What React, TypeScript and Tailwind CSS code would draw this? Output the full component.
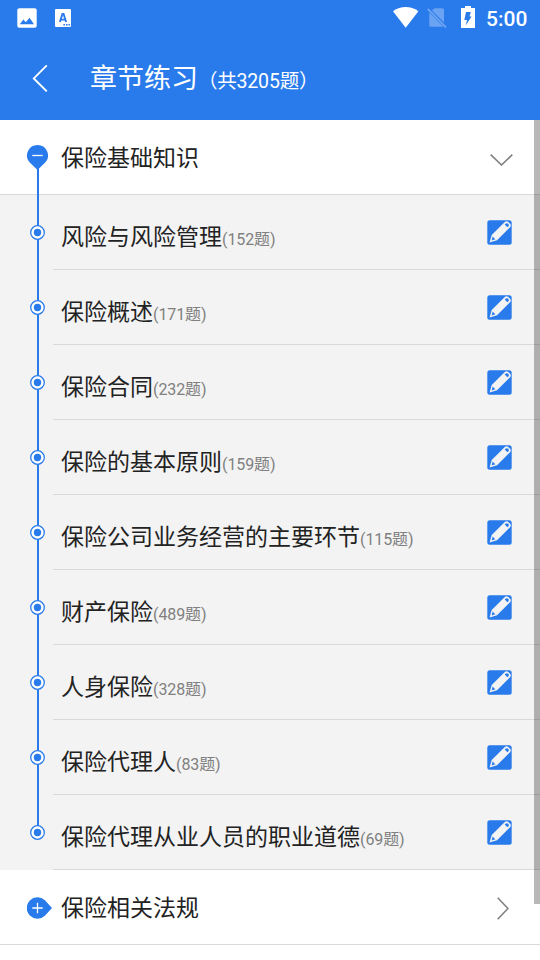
interface Section {
  title: string;
  count: number;
}

const sections: Section[] = [
  { title: "风险与风险管理", count: 152 },
  { title: "保险概述", count: 171 },
  { title: "保险合同", count: 232 },
  { title: "保险的基本原则", count: 159 },
  { title: "保险公司业务经营的主要环节", count: 115 },
  { title: "财产保险", count: 489 },
  { title: "人身保险", count: 328 },
  { title: "保险代理人", count: 83 },
  { title: "保险代理从业人员的职业道德", count: 69 },
];

const StatusBar = () => (
  <div className="flex h-9 items-start text-white">
    <svg className="ml-[17px] mt-2 h-5 w-5" viewBox="0 0 20 20">
      <rect x="0.3" y="0.3" width="19.4" height="19.4" rx="2" fill="#fff" />
      <path d="M2.8 16.3 6.3 11.4 8.8 14.3 12.5 9.8 17 16.3Z" fill="#297bec" />
    </svg>
    <svg className="ml-[18px] mt-[9px] h-[18px] w-4" viewBox="0 0 16 18">
      <rect width="16" height="18" rx="1" fill="#fff" />
      <path d="M4.9 13 7.4 5H8.6L11.1 13M5.8 10.6H10.2" fill="none" stroke="#297bec" strokeWidth="1.9" />
      <path d="M8.4 15h1.6v1.6H8.4zM11 15h1.6v1.6H11zM13.5 15h1.6v1.6h-1.6z" fill="#297bec" />
    </svg>
    <svg className="ml-auto mt-[7px] h-[21px] w-[26px]" viewBox="0 0 26 21">
      <path d="M0 4.2C8 -1.3 17.5 -1.3 25.4 4.2L12.7 20.7Z" fill="#fff" />
    </svg>
    <svg className="ml-2 mt-2 h-5 w-5" viewBox="0 0 20 20">
      <path d="M7.5 0.3H15.5Q17 0.3 17 1.8V14.6L4.9 2.5ZM2.3 4.4 16.4 18.7H3.8Q2.3 18.7 2.3 17.2Z" fill="#fff" fillOpacity="0.3" />
      <path d="M0.7 0.9 19 19.3" stroke="#fff" strokeOpacity="0.32" strokeWidth="1.8" />
    </svg>
    <svg className="ml-[14px] mt-1.5 h-[22px] w-[14px]" viewBox="0 0 14 22">
      <path d="M4 0H10V2H14V22H0V2H4Z" fill="#fff" />
      <path d="M5 6H9.8L8.5 10.4H10.6L4.7 19.4L6 13.9H3.3Z" fill="#297bec" />
    </svg>
    <span className="ml-[11px] mr-3 mt-1.5 w-[42px] whitespace-nowrap text-[21px] font-medium leading-[27px]">5:00</span>
  </div>
);

const EditIcon = () => (
  <svg className="h-[25px] w-[25px]" viewBox="0 0 25 25">
    <rect x="0.3" y="0.3" width="24.4" height="24.4" rx="2.5" fill="#297bec" />
    <path d="M2.6 22.4 4.7 15 17.8 2Q19.5 0.6 21.3 2L23.1 3.8Q24.5 5.5 23 7.2L10 20.2Z" fill="#f3f3f3" />
    <path d="M18.5 3.8Q19.9 2.5 21.3 3.8 22.6 5.1 21.3 6.5L20.4 7.2 17.7 4.5Z" fill="#297bec" />
    <path d="M5.6 16.6 8.3 19.2 4.7 20.4Z" fill="#297bec" />
  </svg>
);

const SectionRow = ({ title, count }: Section) => (
  <li className="flex h-[75px]">
    <div className="flex w-[53px] shrink-0 justify-center pl-[22px] pt-[30px]">
      <svg className="h-[15px] w-[15px]" viewBox="0 0 15 15">
        <circle cx="7.5" cy="7.5" r="6.8" fill="#fff" stroke="#297bec" strokeWidth="1.3" />
        <circle cx="7.5" cy="7.5" r="3.7" fill="#297bec" />
      </svg>
    </div>
    <div className="flex flex-1 justify-between border-b border-[#d9d9d9] pl-2 pr-7">
      <p className="whitespace-nowrap pt-[26px] text-[23px] leading-[34px] text-[#222]">
        {title}
        <span className="text-base leading-none tracking-[-0.1px] text-[#808080]">({count}题)</span>
      </p>
      <button className="mt-[25px] h-[25px]">
        <EditIcon />
      </button>
    </div>
  </li>
);

export default function App() {
  return (
    <div className="relative h-[960px] w-[540px] overflow-hidden bg-white font-['Roboto','Noto_Sans_CJK_SC',sans-serif]">
      <header className="h-[120px] bg-[#297bec] text-white">
        <StatusBar />
        <div className="flex h-[84px] items-center">
          <svg className="ml-8 h-7 w-4" viewBox="0 0 16 28">
            <path d="M14.8 1.4 1.8 14.4 14.8 27.4" fill="none" stroke="#fff" strokeWidth="1.9" />
          </svg>
          <h1 className="ml-[42px] mt-0.5 whitespace-nowrap text-[27px] leading-10">
            章节练习<span className="text-[19.5px] leading-none tracking-[-0.2px]">（共3205题）</span>
          </h1>
        </div>
      </header>

      <main>
        <div className="flex h-[75px] items-center border-b border-[#d9d9d9]">
          <svg className="ml-[27px] h-[25px] w-[21px]" viewBox="0 0 21 25">
            <path d="M10.5 0A10.5 10.5 0 0 1 18.2 17.6L10.5 25 2.8 17.6A10.5 10.5 0 0 1 10.5 0Z" fill="#297bec" />
            <path d="M5.3 10.5H15.7" stroke="#fff" strokeWidth="1.3" />
          </svg>
          <h2 className="ml-[13px] mt-1 text-[23px] leading-[34px] text-[#222]">保险基础知识</h2>
          <svg className="ml-auto mr-[27px] mt-1.5 h-3 w-[23px]" viewBox="0 0 23 12">
            <path d="M0.7 0.7 11.5 11 22.3 0.7" fill="none" stroke="#808080" strokeWidth="1.6" />
          </svg>
        </div>

        <ul className="relative bg-[#f3f3f3]">
          {/* timeline runs from the open marker down to the last dot */}
          <div className="absolute -top-7 bottom-[38px] left-[37px] w-0.5 bg-[#297bec]" />
          <div className="relative">
            {sections.map((section) => (
              <SectionRow key={section.title} {...section} />
            ))}
          </div>
        </ul>

        <div className="flex h-[75px] items-center border-b border-[#d9d9d9]">
          <svg className="ml-[27px] mt-0.5 h-[22px] w-[25px]" viewBox="0 0 25 22">
            <path d="M25 11 17.9 18.7A10.7 10.7 0 1 1 17.9 3.3Z" fill="#297bec" />
            <path d="M5.3 11H15.7M10.5 5.8V16.2" stroke="#fff" strokeWidth="1.3" />
          </svg>
          <h2 className="ml-[9px] mt-1 text-[23px] leading-[34px] text-[#222]">保险相关法规</h2>
          <svg className="ml-auto mr-[31px] mt-0.5 h-[23px] w-3" viewBox="0 0 12 23">
            <path d="M0.7 0.7 11 11.5 0.7 22.3" fill="none" stroke="#808080" strokeWidth="1.6" />
          </svg>
        </div>
      </main>

      {/* scrollbar */}
      <div className="absolute right-0 top-[120px] h-[784px] w-1.5 bg-black/28" />
    </div>
  );
}
